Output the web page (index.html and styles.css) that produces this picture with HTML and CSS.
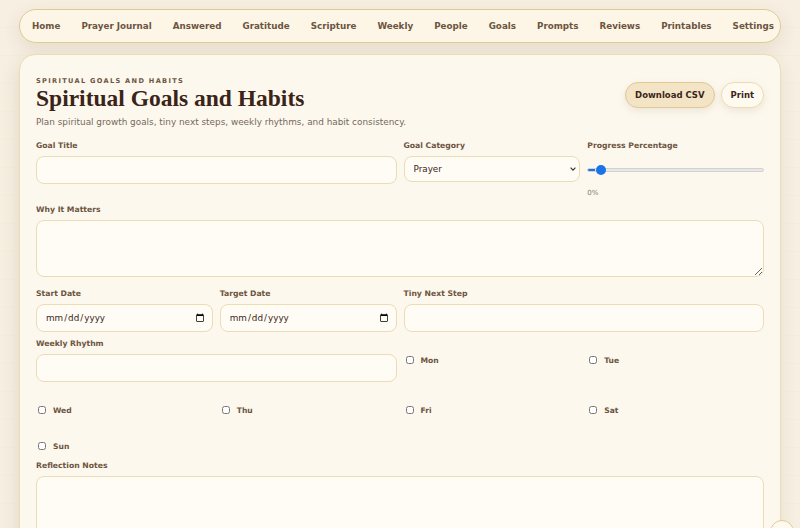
FILE: index.html
```html
<!DOCTYPE html>
<html lang="en">
<head>
    <meta charset="UTF-8">
    <meta name="viewport" content="width=device-width, initial-scale=1.0">
    <title>Spiritual Goals and Habits - Prayer Journal</title>
    <link rel="stylesheet" href="styles.css">
</head>
<body>
    <nav class="top-nav">
        <a href="#">Home</a>
        <a href="#">Prayer Journal</a>
        <a href="#">Answered</a>
        <a href="#">Gratitude</a>
        <a href="#">Scripture</a>
        <a href="#">Weekly</a>
        <a href="#">People</a>
        <a href="#">Goals</a>
        <a href="#">Prompts</a>
        <a href="#">Reviews</a>
        <a href="#">Printables</a>
        <a href="#">Settings</a>
    </nav>

    <main class="card">
        <div class="card-header">
            <div class="heading">
                <p class="eyebrow">Spiritual Goals and Habits</p>
                <h1>Spiritual Goals and Habits</h1>
                <p class="intro">Plan spiritual growth goals, tiny next steps, weekly rhythms, and habit consistency.</p>
            </div>
            <div class="header-actions">
                <button class="btn btn-primary">Download CSV</button>
                <button class="btn">Print</button>
            </div>
        </div>

        <form class="goal-form">
            <div class="field span-2">
                <label for="goal-title">Goal Title</label>
                <input type="text" id="goal-title">
            </div>
            <div class="field">
                <label for="goal-category">Goal Category</label>
                <select id="goal-category">
                    <option>Prayer</option>
                    <option>Scripture</option>
                    <option>Worship</option>
                    <option>Service</option>
                </select>
            </div>
            <div class="field">
                <label for="goal-progress">Progress Percentage</label>
                <input type="range" id="goal-progress" min="0" max="100" value="0">
                <span class="range-value">0%</span>
            </div>

            <div class="field span-4">
                <label for="goal-why">Why It Matters</label>
                <textarea id="goal-why" rows="3"></textarea>
            </div>

            <div class="field">
                <label for="start-date">Start Date</label>
                <input type="date" id="start-date">
            </div>
            <div class="field">
                <label for="target-date">Target Date</label>
                <input type="date" id="target-date">
            </div>
            <div class="field span-2">
                <label for="next-step">Tiny Next Step</label>
                <input type="text" id="next-step">
            </div>

            <div class="field span-2">
                <label for="weekly-rhythm">Weekly Rhythm</label>
                <input type="text" id="weekly-rhythm">
            </div>
            <label class="check"><input type="checkbox"> Mon</label>
            <label class="check"><input type="checkbox"> Tue</label>
            <label class="check"><input type="checkbox"> Wed</label>
            <label class="check"><input type="checkbox"> Thu</label>
            <label class="check"><input type="checkbox"> Fri</label>
            <label class="check"><input type="checkbox"> Sat</label>
            <label class="check"><input type="checkbox"> Sun</label>

            <div class="field span-4">
                <label for="reflection">Reflection Notes</label>
                <textarea id="reflection" rows="5"></textarea>
            </div>
        </form>
    </main>

    <a href="#" class="back-top" aria-label="Back to top"></a>
</body>
</html>
```

FILE: styles.css
```css
:root {
    --page: #f6efe2;
    --card: #fdf8ee;
    --field: #fffcf5;
    --line: #ecdcb3;
    --line-strong: #e0c995;
    --ink: #3a2418;
    --muted: #6c5440;
    --soft: #75685a;
}

* {
    box-sizing: border-box;
}

body {
    margin: 0;
    padding: 9px 19px 24px;
    font-family: "DejaVu Sans", Verdana, sans-serif;
    color: var(--ink);
    background-color: var(--page);
    background-image: repeating-linear-gradient(to bottom, transparent 0 27px, rgba(190, 160, 100, 0.035) 27px 28px);
}

/* top navigation */
.top-nav {
    display: flex;
    align-items: center;
    gap: 21px;
    height: 34px;
    padding: 0 12px;
    background: #fdf6e7;
    border: 1px solid var(--line-strong);
    border-radius: 17px;
    box-shadow: 0 6px 18px rgba(120, 90, 40, 0.12);
    white-space: nowrap;
}

.top-nav a {
    font-size: 8.75px;
    font-weight: bold;
    color: var(--muted);
    text-decoration: none;
}

/* main card */
.card {
    margin-top: 11px;
    padding: 21px 16px 16px;
    background: var(--card);
    border: 1px solid var(--line);
    border-radius: 16px;
    box-shadow: -2px 6px 18px rgba(120, 90, 40, 0.13);
}

.card-header {
    display: flex;
    justify-content: space-between;
    align-items: flex-start;
}

.eyebrow {
    margin: 0;
    font-size: 6.6px;
    line-height: 10px;
    font-weight: bold;
    letter-spacing: 0.2em;
    text-transform: uppercase;
    color: var(--muted);
}

h1 {
    margin: 0;
    font-family: "Liberation Serif", "Times New Roman", serif;
    font-size: 23.5px;
    line-height: 24px;
    font-weight: bold;
    color: var(--ink);
}

.intro {
    margin: 6px 0 0;
    font-size: 8.9px;
    line-height: 12px;
    color: var(--soft);
}

.header-actions {
    display: flex;
    gap: 6px;
    margin-top: 6px;
}

.btn {
    height: 26px;
    padding: 0 9px;
    font-family: inherit;
    font-size: 8.5px;
    font-weight: bold;
    color: var(--ink);
    background: #fffaf0;
    border: 1px solid var(--line);
    border-radius: 13px;
    box-shadow: 0 3px 8px rgba(120, 90, 40, 0.12);
    cursor: pointer;
}

.btn-primary {
    background: #f3e4c6;
    border-color: var(--line-strong);
}

/* form */
.goal-form {
    display: grid;
    grid-template-columns: repeat(4, 1fr);
    gap: 7px;
    margin-top: 13px;
}

.field {
    display: flex;
    flex-direction: column;
    gap: 5px;
}

.span-2 {
    grid-column: span 2;
}

.span-4 {
    grid-column: span 4;
}

.field label {
    font-size: 7.7px;
    line-height: 10px;
    font-weight: bold;
    color: var(--muted);
}

.field input[type="text"],
.field input[type="date"],
.field select,
.field textarea {
    width: 100%;
    height: 28px;
    padding: 0 8px;
    font-family: inherit;
    font-size: 8.8px;
    color: var(--ink);
    background-color: var(--field);
    border: 1px solid var(--line);
    border-radius: 8px;
    outline: none;
}

.field select {
    -webkit-appearance: none;
    appearance: none;
    height: 26px;
    padding: 0 16px 0 9px;
    background-image: url("data:image/svg+xml,%3Csvg xmlns='http://www.w3.org/2000/svg' width='6' height='4' viewBox='0 0 6 4'%3E%3Cpath d='M0.6 0.6 L3 3.1 L5.4 0.6' fill='none' stroke='%23333' stroke-width='1.1'/%3E%3C/svg%3E");
    background-repeat: no-repeat;
    background-position: right 3px center;
}

.field textarea {
    height: 57px;
    padding: 6px 8px;
    margin-bottom: 5px;
    resize: vertical;
}

#reflection {
    height: 90px;
}

.field input[type="date"] {
    padding-right: 6px;
}

.field input[type="date"]::-webkit-calendar-picker-indicator {
    width: 10px;
    height: 10px;
    margin: 0;
    padding: 1px;
}

/* progress slider */
.field input[type="range"] {
    -webkit-appearance: none;
    appearance: none;
    width: 100%;
    height: 27px;
    margin: 0;
    background: transparent;
}

.field input[type="range"]::-webkit-slider-runnable-track {
    height: 4px;
    border: 1px solid #d2d2d2;
    border-radius: 3px;
    background: linear-gradient(to right, #1a73e8 0 7px, #e8e8e8 7px);
}

.field input[type="range"]::-webkit-slider-thumb {
    -webkit-appearance: none;
    width: 10px;
    height: 10px;
    margin-top: -4px;
    margin-left: 8px;
    border-radius: 50%;
    background: #1a73e8;
}

.range-value {
    font-size: 7px;
    line-height: 10px;
    color: #85786a;
}

/* weekday checkboxes */
.check {
    display: flex;
    align-items: center;
    gap: 7px;
    height: 29px;
    padding: 14px 0 1px 2px;
    font-size: 7.6px;
    font-weight: bold;
    color: var(--muted);
}

.check input {
    width: 8px;
    height: 8px;
    margin: 0;
}

.back-top {
    position: fixed;
    right: 6px;
    bottom: -16px;
    width: 24px;
    height: 24px;
    background: #fffaf0;
    border: 1px solid var(--line-strong);
    border-radius: 50%;
}
```
